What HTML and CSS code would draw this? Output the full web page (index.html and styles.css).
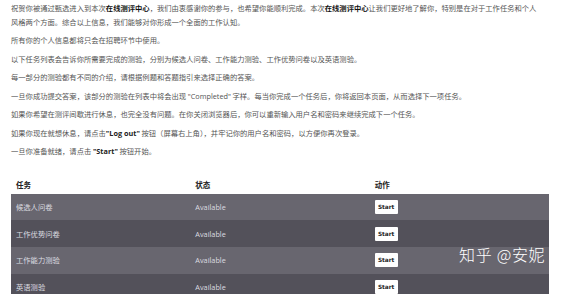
FILE: index.html
```html
<!DOCTYPE html>
<html lang="zh-CN">
<head>
  <meta charset="UTF-8">
  <title>在线测评中心</title>
  <link rel="stylesheet" href="styles.css">
</head>
<body>
  <div class="page">
    <p>祝贺你被通过甄选进入到本次<strong>在线测评中心</strong>，我们由衷感谢你的参与，也希望你能顺利完成。本次<strong>在线测评中心</strong>让我们更好地了解你，特别是在对于工作任务和个人<br>风格两个方面。综合以上信息，我们能够对你形成一个全面的工作认知。</p>
    <p>所有你的个人信息都将只会在招聘环节中使用。</p>
    <p>以下任务列表会告诉你所需要完成的测验，分别为候选人问卷、工作能力测验、工作优势问卷以及英语测验。</p>
    <p>每一部分的测验都有不同的介绍，请根据例题和答题指引来选择正确的答案。</p>
    <p>一旦你成功提交答案，该部分的测验在列表中将会出现 <span class="latin">"Completed"</span> 字样。每当你完成一个任务后，你将返回本页面，从而选择下一项任务。</p>
    <p>如果你希望在测评间歇进行休息，也完全没有问题。在你关闭浏览器后，你可以重新输入用户名和密码来继续完成下一个任务。</p>
    <p>如果你现在就想休息，请点击<b class="latin">"Log out"</b> 按钮（屏幕右上角），并牢记你的用户名和密码，以方便你再次登录。</p>
    <p>一旦你准备就绪，请点击 <b class="latin">"Start"</b> 按钮开始。</p>

    <table class="tasks">
      <thead>
        <tr><th>任务</th><th>状态</th><th>动作</th></tr>
      </thead>
      <tbody>
        <tr><td>候选人问卷</td><td class="status">Available</td><td><button>Start</button></td></tr>
        <tr><td>工作优势问卷</td><td class="status">Available</td><td><button>Start</button></td></tr>
        <tr><td>工作能力测验</td><td class="status">Available</td><td><button>Start</button></td></tr>
        <tr><td>英语测验</td><td class="status">Available</td><td><button>Start</button></td></tr>
      </tbody>
    </table>

    <div class="watermark">知乎 @安妮</div>
  </div>
</body>
</html>
```

FILE: styles.css
```css
* {
  box-sizing: border-box;
}

body {
  margin: 0;
  background: #fff;
  font-family: "Noto Sans CJK SC", "Noto Sans", sans-serif;
  color: #555;
}

.page {
  position: relative;
  padding: 2px 11px 0;
}

p {
  margin: 0 0 5px;
  font-size: 7.3px;
  line-height: 13.5px;
  white-space: nowrap;
}

p strong {
  color: #111;
  font-weight: bold;
}

.latin {
  font-family: "Open Sans", "Noto Sans CJK SC", sans-serif;
}

b.latin {
  color: #222;
}

.tasks {
  width: 538px;
  margin-top: 17px;
  border-collapse: collapse;
  table-layout: fixed;
}

.tasks th {
  height: 18px;
  padding: 0 5px;
  text-align: left;
  font-size: 7.5px;
  font-weight: bold;
  color: #222;
}

.tasks td {
  height: 26.7px;
  padding: 0 5px;
  font-size: 7.3px;
  color: #dcdce0;
  vertical-align: middle;
}

.tasks tbody tr:nth-child(odd) {
  background: #68666f;
}

.tasks tbody tr:nth-child(even) {
  background: #53515a;
}

.status {
  font-family: "Open Sans", sans-serif;
}

button {
  width: 23px;
  height: 14px;
  padding: 0;
  border: none;
  border-radius: 1px;
  background: #fff;
  color: #222;
  font-family: "DejaVu Sans", sans-serif;
  font-size: 5.8px;
  font-weight: bold;
}

.watermark {
  position: absolute;
  left: 459px;
  top: 242px;
  font-size: 16px;
  font-weight: 300;
  color: #fff;
  letter-spacing: 0.7px;
}
```
